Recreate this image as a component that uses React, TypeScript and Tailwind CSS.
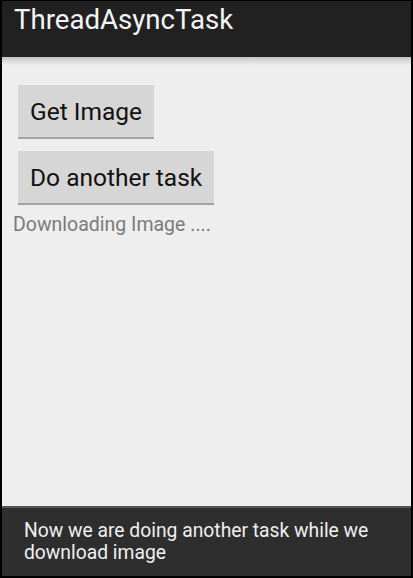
export default function App() {
  return (
    <div
      className="relative flex h-[578px] w-[413px] flex-col overflow-hidden border-x-2 border-t border-b-2 border-black bg-[#eeeeee]"
      style={{ fontFamily: "Roboto, 'Noto Sans', sans-serif" }}
    >
      <header className="h-[56px] shrink-0 bg-[#212121] px-[12px]">
        <h1 className="pt-[2px] text-[27.6px] leading-[33px] font-normal text-[#f5f5f5]">
          ThreadAsyncTask
        </h1>
      </header>
      <div className="h-[8px] shrink-0 bg-gradient-to-b from-[#c4c4c4] to-[#eeeeee]" />

      <main className="flex flex-1 flex-col items-start px-[11px]">
        <div className="flex flex-col items-start gap-[12px] px-[5px] pt-[20px]">
          <button className="h-[54px] border-b-2 border-[#a3a3a3] bg-[#d6d6d6] px-[12px] pt-[3px] text-[24.5px] leading-none text-[#111]">
            Get Image
          </button>
          <button className="h-[54px] border-b-2 border-[#a3a3a3] bg-[#d6d6d6] px-[12px] pt-[3px] text-[24.5px] leading-none text-[#111]">
            Do another task
          </button>
        </div>
        <p className="mt-[8px] text-[19.5px] leading-[24px] text-[#7a7a7a]">
          Downloading Image ....
        </p>
      </main>

      <div className="absolute inset-x-0 bottom-0 h-[70px] border-t-2 border-[#555555] bg-[#2e2e2e] px-[22px] pt-[12px]">
        <p className="text-[19.3px] leading-[22px] text-[#f0f0f0]">
          Now we are doing another task while we download image
        </p>
      </div>
    </div>
  );
}
